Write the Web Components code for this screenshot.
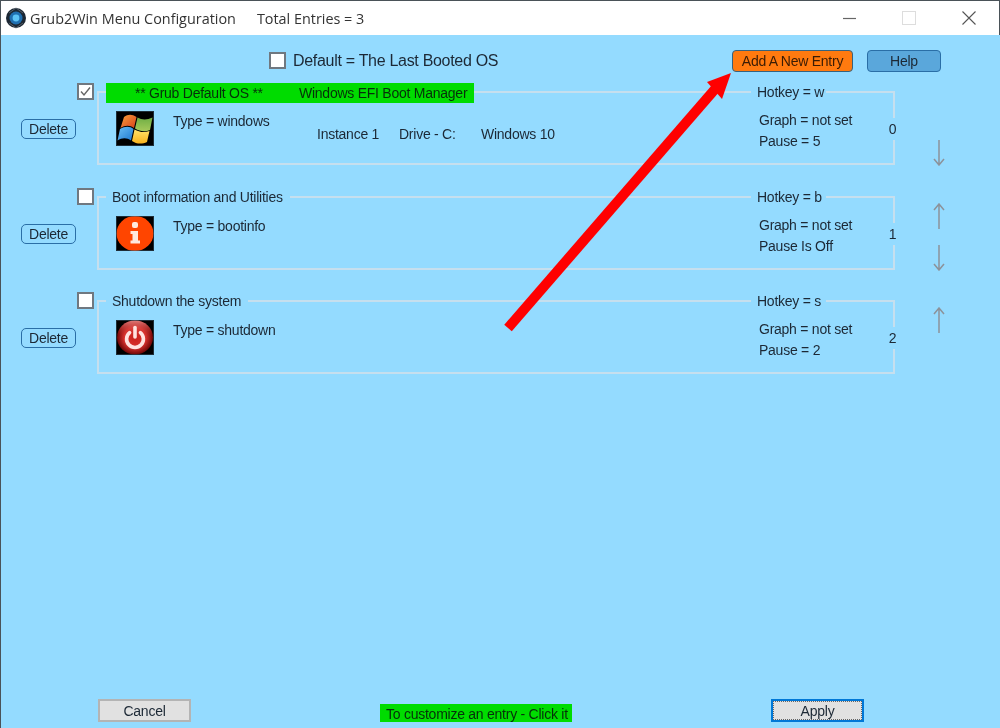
<!DOCTYPE html>
<html>
<head>
<meta charset="utf-8">
<title>Grub2Win Menu Configuration</title>
<style>
  html, body { margin: 0; padding: 0; background: #94dbff; }
</style>
</head>
<body>
<g2w-app>
  <g2w-titlebar heading="Grub2Win Menu Configuration" entries="Total Entries = 3"></g2w-titlebar>
  <g2w-toolbar></g2w-toolbar>

  <g2w-entry number="0" hotkey="Hotkey = w" type="Type = windows" graph="Graph = not set" pause="Pause = 5" icon="windows" checked highlight down>
    <span slot="title" class="a">** Grub Default OS **</span>
    <span slot="title" class="b">Windows EFI Boot Manager</span>
    <span slot="extra">Instance 1</span>
    <span slot="extra">Drive - C:</span>
    <span slot="extra">Windows 10</span>
  </g2w-entry>
  <g2w-entry number="1" hotkey="Hotkey = b" type="Type = bootinfo" graph="Graph = not set" pause="Pause Is Off" icon="info" up down>
    <span slot="title">Boot information and Utilities</span>
  </g2w-entry>
  <g2w-entry number="2" hotkey="Hotkey = s" type="Type = shutdown" graph="Graph = not set" pause="Pause = 2" icon="power" up>
    <span slot="title">Shutdown the system</span>
  </g2w-entry>

  <g2w-footer></g2w-footer>
</g2w-app>

<script>
const ICONS = {
  windows: `<svg width="38" height="35" viewBox="0 0 38 35">
    <defs>
      <linearGradient id="r" x1="0" y1="0" x2="1" y2="1"><stop offset="0" stop-color="#f8a23a"/><stop offset="1" stop-color="#d8401c"/></linearGradient>
      <linearGradient id="g" x1="0" y1="0" x2="0" y2="1"><stop offset="0" stop-color="#6fae45"/><stop offset="1" stop-color="#a6c95a"/></linearGradient>
      <linearGradient id="b" x1="0" y1="0" x2="1" y2="1"><stop offset="0" stop-color="#6cc0f4"/><stop offset="1" stop-color="#1d78d0"/></linearGradient>
      <linearGradient id="y" x1="0" y1="0" x2="0" y2="1"><stop offset="0" stop-color="#ffe36a"/><stop offset="1" stop-color="#f9b21c"/></linearGradient>
    </defs>
    <rect width="38" height="35" fill="#000"/>
    <path d="M8 6 C12 3 16 3 20.5 6 L18 17 C14 14 9 14 4.5 17 Z" fill="url(#r)"/>
    <path d="M21.5 6.5 C26 9 31 9 36.5 6.5 L34 19 C29 21 24 20.5 19 17.5 Z" fill="url(#g)"/>
    <path d="M4 18 C9 15 14 15 17.5 18 L15 29.5 C11 26.5 6 26.5 1.5 29.5 Z" fill="url(#b)"/>
    <path d="M18.5 18.5 C23 21 28 22 33.5 20 L31 31 C26 33.5 20 33 16 30 Z" fill="url(#y)"/>
  </svg>`,
  info: `<svg width="38" height="35" viewBox="0 0 38 35">
    <rect width="38" height="35" fill="#000"/>
    <ellipse cx="19" cy="17.5" rx="18.5" ry="17.5" fill="#ff4500"/>
    <rect x="16" y="6" width="6" height="6" rx="2" fill="#ffe9dc"/>
    <path d="M14.5 15 H22 V24.5 H24 V27.5 H14.5 V24.5 H16.5 V18 H14.5 Z" fill="#ffe9dc"/>
  </svg>`,
  power: `<svg width="38" height="35" viewBox="0 0 38 35">
    <defs>
      <radialGradient id="p" cx="50%" cy="50%" r="50%"><stop offset="0" stop-color="#c9211b"/><stop offset=".6" stop-color="#d8322e"/><stop offset="1" stop-color="#6d0606"/></radialGradient>
      <linearGradient id="ps" x1="0" y1="0" x2="0" y2="1"><stop offset="0" stop-color="#f08a88" stop-opacity=".9"/><stop offset=".45" stop-color="#c9211b" stop-opacity="0"/></linearGradient>
    </defs>
    <rect width="38" height="35" fill="#000"/>
    <ellipse cx="19" cy="17.5" rx="18" ry="17" fill="url(#p)"/>
    <ellipse cx="19" cy="17.5" rx="18" ry="17" fill="url(#ps)"/>
    <path d="M13.6 12.6 A8.4 8.4 0 1 0 24.4 12.6" fill="none" stroke="#ffe3e0" stroke-width="3.6" stroke-linecap="round"/>
    <path d="M19 7.5 V17" stroke="#ffe3e0" stroke-width="3.6" stroke-linecap="round"/>
  </svg>`
};

const UI_FONT = `"Liberation Sans", Arial, sans-serif`;

class G2wApp extends HTMLElement {
  constructor() {
    super();
    this.attachShadow({ mode: "open" });
    this.shadowRoot.innerHTML = `
      <style>
        :host {
          display: flex;
          flex-direction: column;
          position: relative;
          box-sizing: border-box;
          width: 1000px;
          height: 728px;
          overflow: hidden;
          background: #94dbff;
          color: #1c2835;
          font: 14px ${UI_FONT};
          letter-spacing: -0.25px;
          border-left: 1px solid #4a5258;
          /* la captura original esta reescalada y se ve algo borrosa */
          filter: blur(0.35px);
        }
        svg { position: absolute; left: -1px; top: 0; pointer-events: none; }
      </style>
      <slot></slot>
      <svg width="1000" height="728" viewBox="0 0 1000 728">
        <path d="M508 328 L716 88" stroke="#ff0000" stroke-width="10" fill="none"/>
        <path d="M731 73 L707 82 L722 99 Z" fill="#ff0000"/>
      </svg>`;
  }
}

class G2wTitlebar extends HTMLElement {
  constructor() {
    super();
    this.attachShadow({ mode: "open" });
    this.shadowRoot.innerHTML = `
      <style>
        :host {
          display: flex;
          align-items: center;
          box-sizing: border-box;
          height: 35px;
          background: #fff;
          border-top: 1px solid #4a5258;
          border-right: 1px solid #4a5258;
          color: #333;
          font: 14.4px "Open Sans", sans-serif;
          letter-spacing: 0;
        }
        .logo { margin: 0 4px 0 5px; display: block; }
        .entries { margin-left: 21px; }
        .controls { margin-left: auto; display: flex; align-items: center; }
        .controls div { width: 60px; display: flex; justify-content: center; }
      </style>
      <svg class="logo" width="20" height="22" viewBox="0 0 20 22">
        <circle cx="10" cy="11" r="10" fill="#1c2733"/>
        <circle cx="10" cy="11" r="6.5" fill="#1f6fb0"/>
        <circle cx="10" cy="11" r="3.4" fill="#5cc3f5"/>
        <path d="M3 6 L10 1 L17 6 M3 16 L10 21 L17 16" stroke="#55606a" fill="none"/>
      </svg>
      <span id="heading"></span>
      <span class="entries" id="entries"></span>
      <div class="controls">
        <div><svg width="13" height="13" viewBox="0 0 13 13"><path d="M0 6.5 H13" stroke="#666" stroke-width="1.2"/></svg></div>
        <div><svg width="14" height="14" viewBox="0 0 14 14"><rect x=".5" y=".5" width="13" height="13" fill="none" stroke="#ddd"/></svg></div>
        <div><svg width="14" height="14" viewBox="0 0 14 14"><path d="M.5 .5 L13.5 13.5 M13.5 .5 L.5 13.5" stroke="#555" stroke-width="1.1"/></svg></div>
      </div>`;
  }
  connectedCallback() {
    this.shadowRoot.getElementById("heading").textContent = this.getAttribute("heading");
    this.shadowRoot.getElementById("entries").textContent = this.getAttribute("entries");
  }
}

class G2wCheckbox extends HTMLElement {
  constructor() {
    super();
    this.attachShadow({ mode: "open" });
    this.shadowRoot.innerHTML = `
      <style>
        :host {
          display: block;
          box-sizing: border-box;
          width: 17px;
          height: 17px;
          background: #fff;
          border: 2px solid #707880;
        }
        svg { display: none; }
        :host([checked]) svg { display: block; }
      </style>
      <svg width="13" height="13" viewBox="0 0 13 13"><path d="M2 6.5 L5 10 L11 2.5" fill="none" stroke="#666" stroke-width="1.4"/></svg>`;
  }
}

class G2wButton extends HTMLElement {
  constructor() {
    super();
    this.attachShadow({ mode: "open" });
    this.shadowRoot.innerHTML = `
      <style>
        :host {
          display: flex;
          align-items: center;
          justify-content: center;
          box-sizing: border-box;
          border: 1px solid #2a6ea6;
          border-radius: 4px;
          cursor: default;
        }
      </style>
      <slot></slot>`;
  }
}

class G2wToolbar extends HTMLElement {
  constructor() {
    super();
    this.attachShadow({ mode: "open" });
    this.shadowRoot.innerHTML = `
      <style>
        :host {
          display: flex;
          align-items: center;
          box-sizing: border-box;
          height: 47px;
          padding: 15px 0 11px 268px;
        }
        .default { margin-left: 7px; font-size: 16px; letter-spacing: -0.3px; width: 439px; }
        .add { width: 121px; height: 22px; background: #ff7a0f; border-color: #35627f; color: #3a1c05; }
        .help { width: 74px; height: 22px; margin-left: 14px; background: #5aa7db; border-color: #2a6ea6; }
      </style>
      <g2w-checkbox></g2w-checkbox>
      <span class="default">Default = The Last Booted OS</span>
      <g2w-button class="add">Add A New Entry</g2w-button>
      <g2w-button class="help">Help</g2w-button>`;
  }
}

class G2wEntry extends HTMLElement {
  constructor() {
    super();
    this.attachShadow({ mode: "open" });
    this.shadowRoot.innerHTML = `
      <style>
        :host {
          display: grid;
          grid-template-columns: 55px 17px 798px 90px;
          box-sizing: border-box;
          height: 104.5px;
          padding-left: 20px;
        }
        .del {
          width: 55px; height: 20px; margin-top: 37px;
          border: 1.5px solid #2a6ea6;
          border-radius: 5px;
        }
        .col-check { padding: 1px 0 0 1px; }
        .frame { margin-left: 4px; width: 798px; height: 83px; position: relative; display: flex; flex-direction: column; }
        .head { display: flex; height: 20px; align-items: stretch; }
        .line { margin-top: 9px; border-top: 2px solid #c6dfee; }
        .line.start { width: 7px; border-left: 2px solid #c6dfee; }
        .line.fill { flex: 1; }
        .line.end { width: 67px; border-right: 2px solid #c6dfee; }
        .title { padding: 0 7px 0 6px; line-height: 20px; white-space: nowrap; }
        :host([highlight]) .title { width: 368px; box-sizing: border-box; padding: 0; margin-top: 1px; line-height: 20px; height: 20px; background: #00dc00; color: #06300a; display: flex; }
        ::slotted(.a) { margin-left: 29px; width: 164px; }
        .hotkey { width: 75px; box-sizing: border-box; padding-left: 6px; line-height: 20px; white-space: nowrap; }
        .body {
          flex: 1;
          border: 2px solid #c6dfee;
          border-top: 0;
          display: grid;
          grid-template-columns: 38px 125px 1fr 136px;
          column-gap: 19px;
          padding: 9px 0 0 17px;
          box-sizing: border-box;
        }
        .icon { height: 35px; outline: 1px solid rgba(60,90,110,.5); outline-offset: -1px; }
        .icon svg { display: block; }
        .type { line-height: 18px; margin-top: 1px; }
        .extra { display: flex; margin-top: 14px; line-height: 18px; white-space: nowrap; }
        ::slotted([slot="extra"]) { width: 82px; }
        .info { line-height: 21px; margin-top: -1px; margin-left: 2px; white-space: nowrap; }
        /* el numero tapa el borde derecho */
        .num { position: absolute; right: -2px; top: 36px; width: 9px; height: 22px; line-height: 22px; text-align: center; background: #94dbff; }
        .moves { display: grid; grid-template-rows: 42px 26px; padding: 16px 0 0 42px; }
        .moves svg { display: block; }
        .moves .hide { visibility: hidden; }
      </style>
      <g2w-button class="del">Delete</g2w-button>
      <div class="col-check"><g2w-checkbox id="check"></g2w-checkbox></div>
      <div class="frame">
        <div class="head">
          <div class="line start"></div>
          <div class="title"><slot name="title"></slot></div>
          <div class="line fill"></div>
          <div class="hotkey" id="hotkey"></div>
          <div class="line end"></div>
        </div>
        <div class="body">
          <div class="icon" id="icon"></div>
          <div class="type" id="type"></div>
          <div class="extra"><slot name="extra"></slot></div>
          <div class="info"><div id="graph"></div><div id="pause"></div></div>
        </div>
        <div class="num" id="num"></div>
      </div>
      <div class="moves">
        <svg id="up" width="12" height="26" viewBox="0 0 12 26"><path d="M6 1 V26 M1 7 L6 1 L11 7" fill="none" stroke="#8c929a" stroke-width="1.5"/></svg>
        <svg id="down" width="12" height="26" viewBox="0 0 12 26"><path d="M6 0 V25 M1 19 L6 25 L11 19" fill="none" stroke="#8c929a" stroke-width="1.5"/></svg>
      </div>`;
  }
  connectedCallback() {
    const s = this.shadowRoot;
    s.getElementById("hotkey").textContent = this.getAttribute("hotkey");
    s.getElementById("type").textContent = this.getAttribute("type");
    s.getElementById("graph").textContent = this.getAttribute("graph");
    s.getElementById("pause").textContent = this.getAttribute("pause");
    s.getElementById("num").textContent = this.getAttribute("number");
    s.getElementById("icon").innerHTML = ICONS[this.getAttribute("icon")];
    if (this.hasAttribute("checked")) s.getElementById("check").setAttribute("checked", "");
    if (!this.hasAttribute("up")) s.getElementById("up").classList.add("hide");
    if (!this.hasAttribute("down")) s.getElementById("down").classList.add("hide");
  }
}

class G2wFooter extends HTMLElement {
  constructor() {
    super();
    this.attachShadow({ mode: "open" });
    this.shadowRoot.innerHTML = `
      <style>
        :host {
          display: flex;
          align-items: flex-end;
          margin-top: auto;
          padding: 0 0 6px 97px;
        }
        g2w-button { width: 93px; height: 23px; background: #e1e1e1; border-radius: 0; }
        .cancel { border: 2px solid #b4b4b4; }
        .apply { border: 2px solid #0078d7; outline: 1px dotted #666; outline-offset: -3px; margin-left: 199px; }
        .hint {
          width: 192px; height: 18px; line-height: 20px; margin-left: 189px;
          box-sizing: border-box; padding-left: 6px;
          background: #00dc00; color: #06300a; white-space: nowrap;
        }
      </style>
      <g2w-button class="cancel">Cancel</g2w-button>
      <div class="hint">To customize an entry - Click it</div>
      <g2w-button class="apply">Apply</g2w-button>`;
  }
}

customElements.define("g2w-app", G2wApp);
customElements.define("g2w-titlebar", G2wTitlebar);
customElements.define("g2w-checkbox", G2wCheckbox);
customElements.define("g2w-button", G2wButton);
customElements.define("g2w-toolbar", G2wToolbar);
customElements.define("g2w-entry", G2wEntry);
customElements.define("g2w-footer", G2wFooter);
</script>
</body>
</html>
